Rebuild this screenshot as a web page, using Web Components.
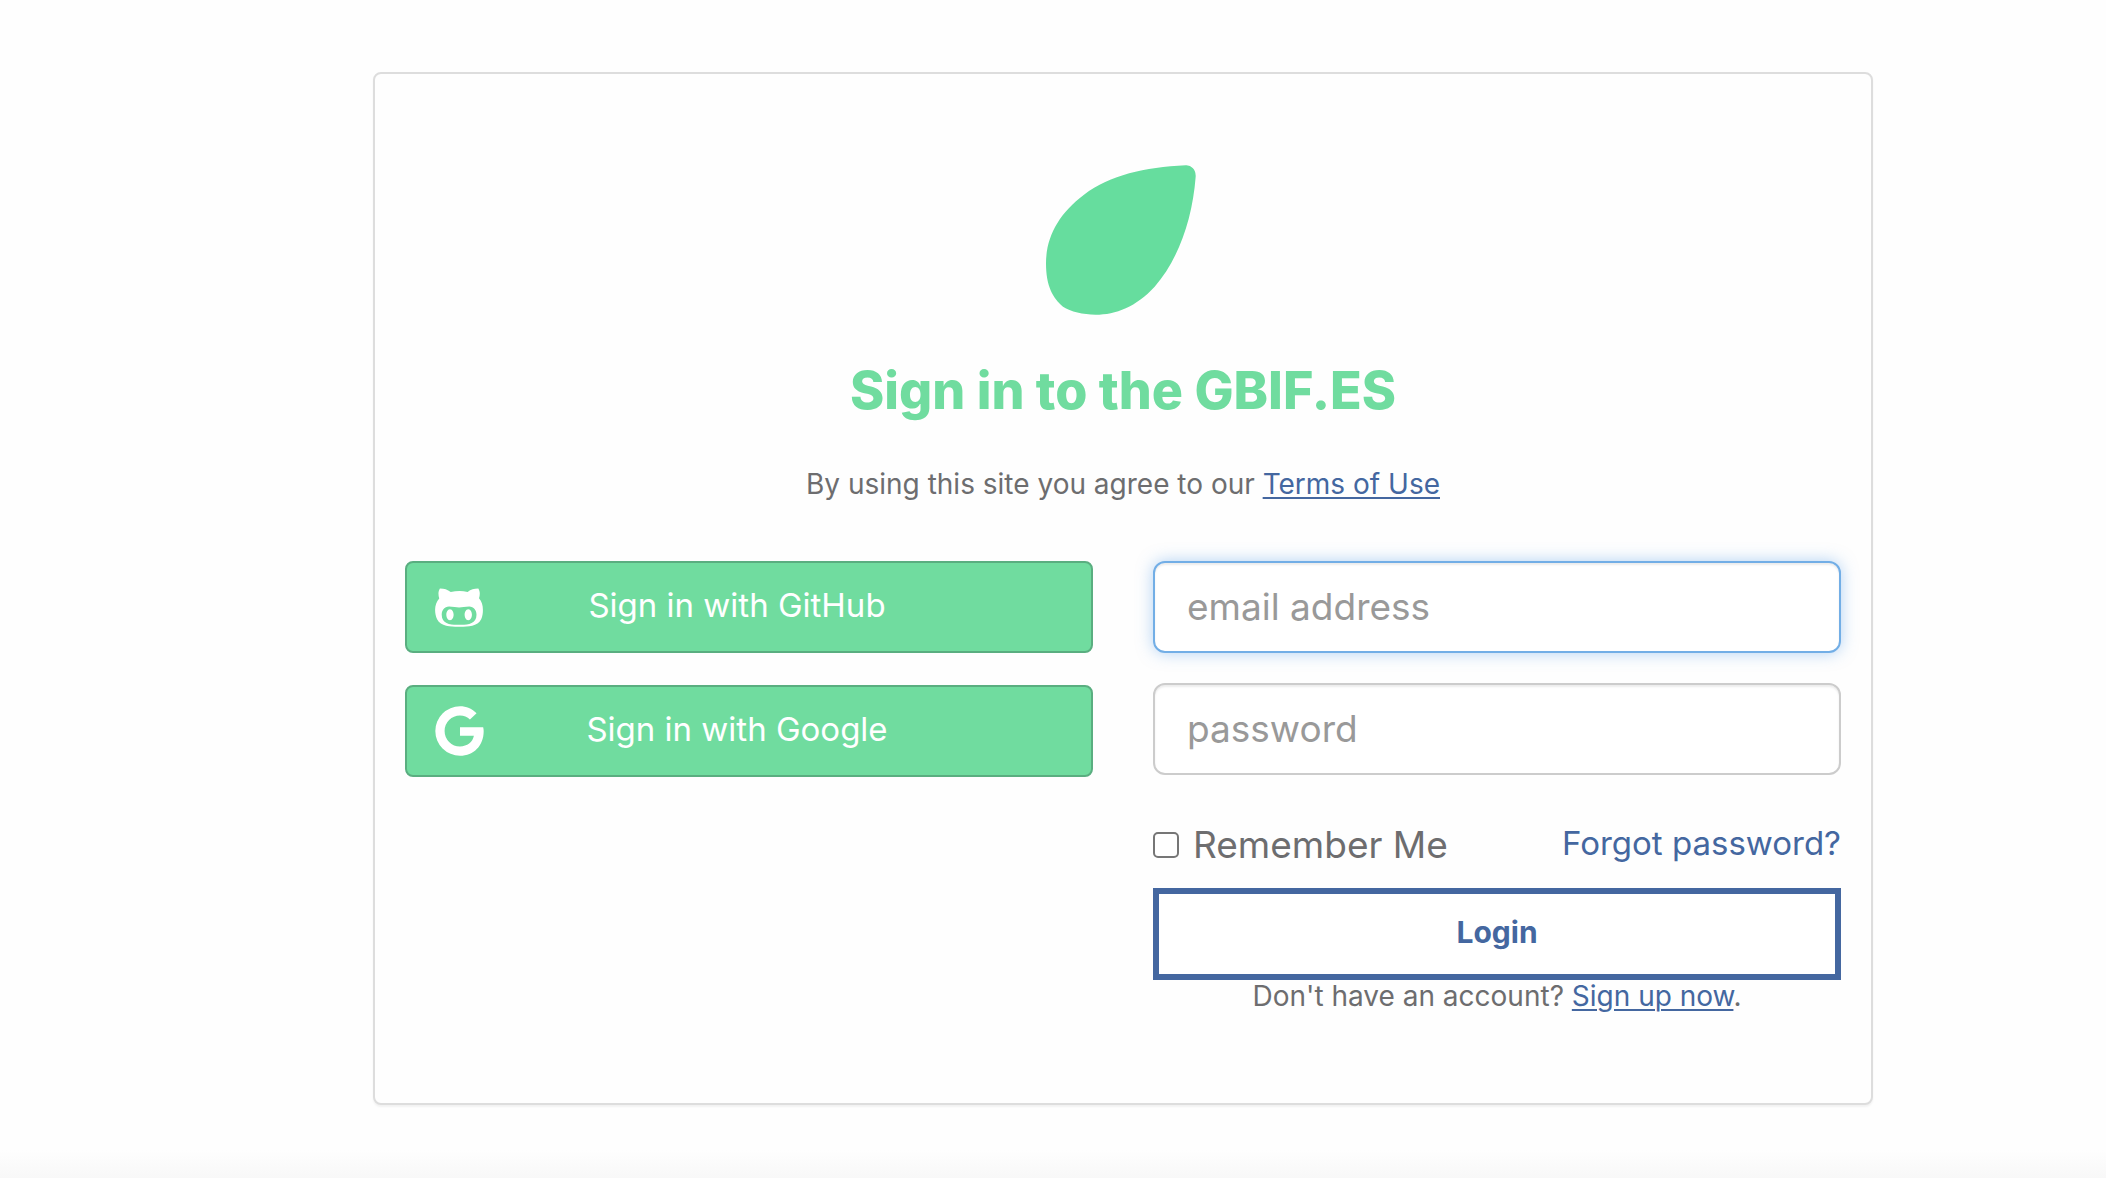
<!DOCTYPE html>
<html lang="en">
<head>
<meta charset="utf-8">
<title>Sign in</title>
<style>
html { height: 100%; }
body {
  margin: 0; min-height: 100%; box-sizing: border-box;
  padding: 72px 233px 72px 373px;
  font-family: Inter, "Liberation Sans", sans-serif; font-size: 28px; line-height: 36px;
  color: #6d6d6f;
  background: linear-gradient(to top, #f8f8f8, #fefefe 28px);
}
</style>
</head>
<body>
<login-card>
  <leaf-logo slot="logo"></leaf-logo>
  <span slot="title">Sign in to the GBIF.ES</span>
  <span slot="terms">By using this site you agree to our <text-link underlined>Terms of Use</text-link></span>
  <provider-button slot="providers" icon="github">Sign in with GitHub</provider-button>
  <provider-button slot="providers" icon="google">Sign in with Google</provider-button>
  <login-form slot="form"></login-form>
</login-card>

<script>
class Base extends HTMLElement {
  constructor() {
    super();
    this.attachShadow({ mode: "open" });
  }
  connectedCallback() {
    this.shadowRoot.innerHTML = this.render();
  }
}

customElements.define("leaf-logo", class extends Base {
  render() {
    return `<style>
      :host { display: block; width: 150px; height: 150px; }
      svg { display: block; width: 100%; height: 100%; }
    </style>
    <svg viewBox="76 75 450 450" aria-hidden="true"><path fill="#66dd9e" d="M495 76Q508 75 516 84Q526 94 525 110C515 240 472 360 402 440C347 500 285 524 225 524C187 523 150 515 127 500C97 475 76 440 76 370C76 290 115 220 190 164C270 105 370 82 495 76Z"/></svg>`;
  }
});

customElements.define("text-link", class extends Base {
  render() {
    return `<style>
      :host { display: inline; }
      a { color: #4467a0; text-decoration: none; }
      :host([underlined]) a { text-decoration: underline; text-decoration-thickness: 2px; text-underline-offset: 3px; }
    </style><a href="#"><slot></slot></a>`;
  }
});

const ICONS = {
  github: `<svg viewBox="0 0 480 512" width="48" height="51" aria-hidden="true"><path fill="currentColor" d="M186.1 328.7c0 20.9-10.9 55.1-36.7 55.1s-36.7-34.2-36.7-55.1 10.9-55.1 36.7-55.1 36.7 34.2 36.7 55.1zM480 278.2c0 31.9-3.2 65.7-17.5 95-37.9 76.6-142.1 74.8-216.7 74.8-75.8 0-186.2 2.7-225.6-74.8-14.6-29-20.2-63.1-20.2-95 0-41.9 13.9-81.5 41.5-113.6-5.2-15.8-7.7-32.4-7.7-48.8 0-21.5 4.9-32.3 14.6-51.8 45.3 0 74.3 9 108.8 36 29-6.9 58.8-10 88.7-10 27 0 54.2 2.9 80.4 9.2 34-26.7 63-35.2 107.8-35.2 9.8 19.5 14.6 30.3 14.6 51.8 0 16.4-2.6 32.7-7.7 48.2 27.5 32.4 39 72.3 39 114.2zm-64.3 50.5c0-43.9-26.7-82.6-73.5-82.6-18.9 0-37 3.4-56 6-14.9 2.3-29.8 3.2-45.1 3.2-15.2 0-30.1-.9-45.1-3.2-18.7-2.6-37-6-56-6-46.8 0-73.5 38.7-73.5 82.6 0 87.8 80.4 101.3 150.4 101.3h48.2c70.3 0 150.6-13.4 150.6-101.3zm-82.6-55.1c-25.8 0-36.7 34.2-36.7 55.1s10.9 55.1 36.7 55.1 36.7-34.2 36.7-55.1-10.9-55.1-36.7-55.1z"/></svg>`,
  google: `<svg viewBox="103 437 147 151" width="49" height="50" aria-hidden="true"><path fill="currentColor" d="M228 459L208 478C200 470 190 466 178 466A46.5 46.5 0 0 0 178 559C200 559 216 547 220 527H178V501H248Q249.5 507 249.5 513C249.5 556 220 587 178 587A74.5 74.5 0 0 1 178 438C197 438 215 446 228 459Z"/></svg>`
};

customElements.define("provider-button", class extends Base {
  render() {
    return `<style>
      :host { display: block; }
      button {
        display: grid; grid-template-columns: 50px 1fr 74px; align-items: center;
        width: 100%; height: 92px; box-sizing: border-box; margin: 0; padding: 0 27px;
        border: 2px solid #5aae80; border-radius: 8px; background: #70dc9f; color: #fff;
        font: inherit; font-size: 33px; line-height: 40px; text-align: center; cursor: pointer;
      }
      svg { display: block; justify-self: center; }
      .label { padding-bottom: 4px; }
    </style>
    <button type="button">${ICONS[this.getAttribute("icon")]}<span class="label"><slot></slot></span></button>`;
  }
});

customElements.define("text-field", class extends Base {
  render() {
    const label = this.getAttribute("label");
    return `<style>
      :host { display: block; }
      input {
        display: block; width: 100%; height: 92px; box-sizing: border-box; margin: 0; padding: 0 32px 2px;
        border: 2px solid #ccc; border-radius: 12px; background: #fff; outline: 0;
        box-shadow: inset 0 2px 2px rgba(0,0,0,.075);
        color: #555; font: inherit; font-size: 37px;
      }
      :host([active]) input { border-color: #72aee6; box-shadow: inset 0 2px 2px rgba(0,0,0,.075), 0 0 16px rgba(102,165,233,.5); }
      input::placeholder { color: #999; opacity: 1; }
    </style>
    <input type="${this.getAttribute("type")}" placeholder="${label}" aria-label="${label}">`;
  }
});

customElements.define("check-field", class extends Base {
  render() {
    return `<style>
      :host { display: block; }
      label { display: flex; align-items: center; gap: 14px; font-size: 37px; line-height: 44px; }
      input {
        appearance: none; width: 26px; height: 26px; margin: 0; box-sizing: border-box;
        border: 2px solid #767676; border-radius: 5px; background: #fff;
      }
      input:checked { background: #4467a0; }
    </style>
    <label><input type="checkbox"><slot></slot></label>`;
  }
});

customElements.define("login-form", class extends Base {
  render() {
    return `<style>
      :host { display: block; }
      form { margin: 0; display: flex; flex-direction: column; }
      .fields { display: flex; flex-direction: column; gap: 30px; }
      .options { display: flex; justify-content: space-between; align-items: flex-start; margin-top: 48px; font-size: 33px; line-height: 40px; padding-bottom: 21px; }
      button {
        height: 92px; box-sizing: border-box; margin: 0; padding: 0 0 4px;
        border: 6px solid #4467a0; border-radius: 0; background: #fff; color: #4467a0;
        font: inherit; font-size: 30px; font-weight: 700; cursor: pointer;
      }
      p { margin: 0; text-align: center; line-height: 32px; }
    </style>
    <form>
      <div class="fields">
        <text-field type="email" label="email address" active></text-field>
        <text-field type="password" label="password"></text-field>
      </div>
      <div class="options"><check-field>Remember Me</check-field><text-link>Forgot password?</text-link></div>
      <button type="button">Login</button>
      <p>Don't have an account? <text-link underlined>Sign up now</text-link>.</p>
    </form>`;
  }
});

customElements.define("login-card", class extends Base {
  render() {
    return `<style>
      :host {
        display: block; max-width: 1500px; box-sizing: border-box; padding: 91px 30px;
        border: 2px solid #ddd; border-radius: 8px; background: #fefefe;
        box-shadow: 0 2px 2px rgba(0,0,0,.05);
      }
      header { display: flex; flex-direction: column; align-items: center; text-align: center; }
      .logo { padding-right: 5px; }
      h1 { margin: 46px 0 0; color: #70dc9f; font-size: 52px; line-height: 60px; font-weight: 800; }
      p { margin: 45px 0 0; }
      .columns { display: grid; grid-template-columns: 1fr 1fr; gap: 60px; margin-top: 59px; }
      .providers { display: flex; flex-direction: column; gap: 32px; }
    </style>
    <header>
      <div class="logo"><slot name="logo"></slot></div>
      <h1><slot name="title"></slot></h1>
      <p><slot name="terms"></slot></p>
    </header>
    <div class="columns">
      <div class="providers"><slot name="providers"></slot></div>
      <slot name="form"></slot>
    </div>`;
  }
});
</script>
</body>
</html>
